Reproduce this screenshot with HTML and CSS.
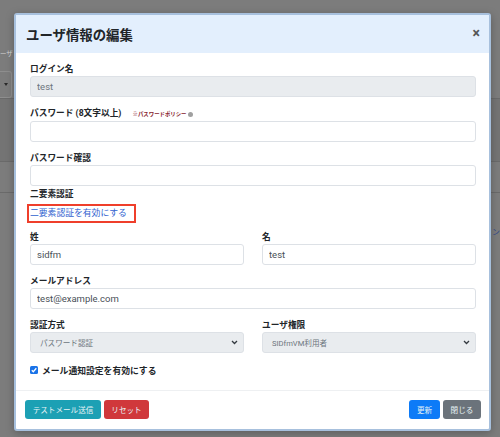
FILE: index.html
```html
<!DOCTYPE html>
<html lang="ja">
<head>
    <meta charset="UTF-8">
    <meta name="viewport" content="width=device-width, initial-scale=1.0">
    <title>ユーザ情報の編集</title>
    <link rel="stylesheet" href="styles.css">
</head>
<body>
    <div class="page">
        <div class="page-head"><span class="page-title">ーザ</span></div>
        <div class="page-select"><span class="caret"></span></div>
        <div class="page-table">
            <div class="page-row page-row-head"></div>
            <div class="page-row"></div>
            <div class="page-row"><span class="page-link">ン</span></div>
        </div>
    </div>

    <div class="modal">
        <div class="modal-header">
            <h5 class="modal-title">ユーザ情報の編集</h5>
            <span class="close">&times;</span>
        </div>

        <div class="modal-body">
            <div class="form-group">
                <label>ログイン名</label>
                <input class="form-control" type="text" value="test" disabled>
            </div>
            <div class="form-group">
                <label>パスワード (8文字以上) <span class="policy">※パスワードポリシー<span class="policy-icon"></span></span></label>
                <input class="form-control" type="password">
            </div>
            <div class="form-group tight">
                <label>パスワード確認</label>
                <input class="form-control" type="password">
            </div>
            <div class="form-group two-factor">
                <label>二要素認証</label>
                <a class="mark" href="#">二要素認証を有効にする</a>
            </div>
            <div class="form-row">
                <div class="form-group">
                    <label>姓</label>
                    <input class="form-control" type="text" value="sidfm">
                </div>
                <div class="form-group">
                    <label>名</label>
                    <input class="form-control" type="text" value="test">
                </div>
            </div>
            <div class="form-group">
                <label>メールアドレス</label>
                <input class="form-control" type="text" value="test@example.com">
            </div>
            <div class="form-row">
                <div class="form-group">
                    <label>認証方式</label>
                    <div class="custom-select">
                        <span>パスワード認証</span>
                        <svg width="7" height="5" viewBox="0 0 7 5"><path d="M1 1l2.5 2.5L6 1" fill="none" stroke="#343a40" stroke-width="1.3"/></svg>
                    </div>
                </div>
                <div class="form-group">
                    <label>ユーザ権限</label>
                    <div class="custom-select">
                        <span>SIDfmVM利用者</span>
                        <svg width="7" height="5" viewBox="0 0 7 5"><path d="M1 1l2.5 2.5L6 1" fill="none" stroke="#343a40" stroke-width="1.3"/></svg>
                    </div>
                </div>
            </div>
            <div class="check">
                <svg class="check-box" width="8" height="8" viewBox="0 0 8 8">
                    <rect width="8" height="8" rx="1.5" fill="#1a73e8"/>
                    <path d="M1.8 4.2l1.5 1.5 3-3.4" fill="none" stroke="#fff" stroke-width="1.3"/>
                </svg>
                <span>メール通知設定を有効にする</span>
            </div>
        </div>

        <div class="modal-footer">
            <div class="btn-group">
                <button class="btn btn-info">テストメール送信</button>
                <button class="btn btn-danger">リセット</button>
            </div>
            <div class="btn-group">
                <button class="btn btn-primary">更新</button>
                <button class="btn btn-secondary">閉じる</button>
            </div>
        </div>
    </div>
</body>
</html>
```

FILE: styles.css
```css
* {
    margin: 0;
    padding: 0;
    box-sizing: border-box;
}

body {
    font-family: Roboto, "Noto Sans CJK JP", sans-serif;
    background: #7c7c7c;
    width: 500px;
    height: 437px;
    overflow: hidden;
    color: #212529;
}

/* dimmed page behind the modal */
.page {
    padding-top: 48px;
}

.page-head {
    height: 12px;
    font-size: 6.5px;
    line-height: 12px;
}

.page-title {
    color: #d4d4d4;
}

.page-select {
    margin-top: 11px;
    width: 12px;
    height: 27px;
    border: 1px solid #8e8e8e;
    border-left: none;
    border-radius: 0 3px 3px 0;
    display: flex;
    align-items: center;
    justify-content: center;
}

.caret {
    border-left: 2px solid transparent;
    border-right: 2px solid transparent;
    border-top: 3px solid #2a2a2a;
}

.page-row {
    height: 31px;
    border-top: 1px solid #6a6a6a;
    display: flex;
    justify-content: flex-end;
    align-items: flex-end;
}

.page-row-head {
    height: 63px;
    background: #747474;
}

.page-link {
    color: #34498a;
    font-size: 8px;
    margin-right: 0;
    margin-bottom: -14px;
}

/* modal */
.modal {
    position: absolute;
    top: 13px;
    left: 14px;
    width: 477px;
    background: #fff;
    border: 2px solid #a7c0dd;
    border-radius: 3px;
    box-shadow: 0 2px 8px rgba(0, 0, 0, 0.25);
}

.modal-header {
    height: 38px;
    background: #e3effd;
    display: flex;
    align-items: center;
    justify-content: space-between;
    padding: 0 9px 0 10px;
}

.modal-title {
    font-size: 13.4px;
    font-weight: bold;
    color: #212529;
}

.close {
    font-size: 14px;
    font-weight: bold;
    color: #555;
    margin-top: -3px;
}

.modal-body {
    padding: 10px 13px 13px 14px;
}

.form-group {
    margin-bottom: 10px;
}

.form-group.tight {
    margin-bottom: 2px;
}

.form-group.two-factor {
    margin-bottom: 8px;
}

label {
    display: block;
    font-size: 8.7px;
    line-height: 12px;
    font-weight: bold;
    margin-bottom: 1px;
    color: #212529;
}

.policy {
    font-size: 5.4px;
    color: #86222e;
    font-weight: bold;
    margin-left: 9px;
}

.policy-icon {
    display: inline-block;
    width: 5px;
    height: 5px;
    border-radius: 50%;
    background: #a0a0a0;
    margin-left: 1px;
    vertical-align: middle;
}

.form-control {
    display: block;
    width: 100%;
    height: 21px;
    padding: 0 6px;
    font-family: Roboto, "Noto Sans CJK JP", sans-serif;
    font-size: 9.5px;
    color: #495057;
    background: #fff;
    border: 1px solid #dde1e6;
    border-radius: 3px;
    outline: none;
}

.form-control:disabled {
    background: #e9ecef;
    color: #6c757d;
}

.mark {
    display: inline-block;
    margin-top: 1px;
    margin-left: -3px;
    padding: 0 7px 0 1px;
    height: 19px;
    line-height: 15px;
    border: 2px solid #ef3f2b;
    font-size: 8.8px;
    color: #2f62cf;
    text-decoration: none;
}

.form-row {
    display: grid;
    grid-template-columns: 1fr 1fr;
    gap: 18px;
}

.form-row:first-of-type .form-group {
    margin-bottom: 8px;
}

.custom-select {
    height: 21px;
    display: flex;
    align-items: center;
    justify-content: space-between;
    padding: 0 5px 0 9px;
    background: #e9ecef;
    border: 1px solid #dde1e6;
    border-radius: 3px;
    font-size: 7.6px;
    color: #6c757d;
}

.form-row:last-of-type .form-group {
    margin-bottom: 11px;
}

.check {
    display: flex;
    align-items: center;
    gap: 4px;
    height: 14px;
    font-size: 8.8px;
    font-weight: bold;
}

.modal-footer {
    border-top: 1px solid #eef0f2;
    padding: 9px 8px 10px 9px;
    display: flex;
    justify-content: space-between;
}

.btn-group {
    display: flex;
    gap: 3px;
}

.btn {
    height: 19px;
    padding: 0 7px;
    border: none;
    border-radius: 3px;
    font-family: "Noto Sans CJK JP", sans-serif;
    font-size: 7.6px;
    color: #e8f3f6;
}

.btn-info {
    background: #1ca0b4;
    width: 76px;
}

.btn-danger {
    background: #d0383b;
    width: 45px;
}

.btn-primary {
    background: #0d7bf7;
    width: 31px;
}

.btn-secondary {
    background: #6b737b;
    width: 38px;
}
```
